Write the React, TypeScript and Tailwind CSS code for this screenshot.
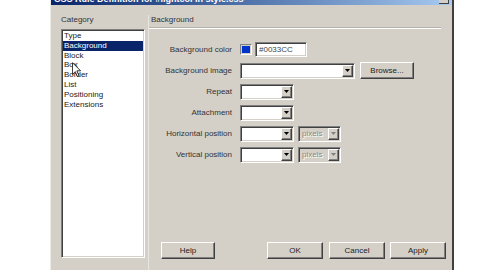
const sunken =
  "border border-t-[#808080] border-l-[#808080] border-r-white border-b-white shadow-[inset_1px_1px_0_#404040,inset_-1px_-1px_0_#d4d0c8]";
const raised =
  "border border-t-white border-l-white border-r-[#404040] border-b-[#404040] shadow-[inset_-1px_-1px_0_#808080] bg-[#d4d0c8]";

const CATEGORIES = ["Type", "Background", "Block", "Box", "Border", "List", "Positioning", "Extensions"];

function Arrow({ disabled }: { disabled?: boolean }) {
  return (
    <div className={`${raised} flex h-full w-[11px] shrink-0 items-center justify-center`}>
      <svg width="5" height="3" viewBox="0 0 5 3">
        <polygon points="0,0 5,0 2.5,3" fill={disabled ? "#808080" : "#000"} />
      </svg>
    </div>
  );
}

function Select({ w, disabled, value }: { w: string; disabled?: boolean; value?: string }) {
  return (
    <div
      className={`${sunken} ${w} flex h-[16px] items-stretch p-[1px] ${disabled ? "bg-[#d4d0c8]" : "bg-white"}`}
    >
      <div className="flex-1 truncate pl-[2px] leading-[12px] text-[#8a8780] [text-shadow:1px_1px_0_#fff]">
        {value}
      </div>
      <Arrow disabled={disabled} />
    </div>
  );
}

function Button({ label, w }: { label: string; w: string }) {
  return (
    <div className={`${raised} ${w} flex h-[17px] items-center justify-center text-[#222]`}>{label}</div>
  );
}

function Row({ label, children }: { label: string; children: React.ReactNode }) {
  return (
    <div className="flex h-[21px] items-center">
      <div className="w-[83px] shrink-0 text-right text-[#333]">{label}</div>
      <div className="ml-[8px] flex items-center">{children}</div>
    </div>
  );
}

export default function App() {
  return (
    <div className="relative flex h-[270px] w-[480px] overflow-hidden bg-white font-['Liberation_Sans',Arial,sans-serif] text-[8px] text-[#1c1c1c]">
      <div className="w-[50px] shrink-0" />
      <div className="flex w-[404px] shrink-0 flex-col border-l border-r-2 border-l-[#ecebe6] border-r-[#404040] bg-[#d4d0c8]">
        {/* title bar, mostly scrolled off the top */}
        <div className="flex h-[5px] items-start overflow-hidden bg-linear-to-r from-[#0a246a] to-[#a6caf0]">
          <div className="-mt-[6px] h-[11px] flex-1 pl-[3px] text-[9px] font-bold leading-[11px] text-white">
            CSS Rule Definition for #lightcol in style.css
          </div>
          <div className="mr-[3px] h-[4px] w-[10px] border-r border-b border-[#404040] bg-[#d4d0c8]" />
        </div>

        <div className="flex flex-1 pt-[10px]">
          {/* category column */}
          <div className="flex w-[96px] shrink-0 flex-col pl-[10px]">
            <div className="h-[10px] leading-[10px] text-[#333]">Category</div>
            <div className={`${sunken} mt-[4px] h-[229px] w-[84px] bg-white p-[1px]`}>
              {CATEGORIES.map((c) => (
                <div
                  key={c}
                  className={`h-[9.8px] pl-[1px] leading-[9.8px] ${
                    c === "Background" ? "bg-[#0a246a] text-white" : "text-[#222]"
                  }`}
                >
                  {c}
                </div>
              ))}
            </div>
          </div>

          {/* panel */}
          <div className="ml-[1px] flex flex-1 flex-col border-l border-l-[#e8e6e0]">
            <div className="h-[10px] pl-[2px] leading-[10px] text-[#333]">Background</div>
            <div className="mt-[2px] mr-[11px] border-t border-b border-t-[#b5b2aa] border-b-white" />

            <div className="mt-[10px] flex flex-col">
              <Row label="Background color">
                <div className="h-[11px] w-[12px] border border-[#808080] border-r-white border-b-white p-[1px]">
                  <div className="h-full w-full bg-[#0033cc]" />
                </div>
                <div className={`${sunken} ml-[3px] flex h-[15px] w-[52px] items-center bg-white pl-[3px] text-[#444]`}>
                  #0033CC
                </div>
              </Row>
              <Row label="Background image">
                <Select w="w-[115px]" />
                <div className="ml-[5px]">
                  <Button label="Browse..." w="w-[54px]" />
                </div>
              </Row>
              <Row label="Repeat">
                <Select w="w-[54px]" />
              </Row>
              <Row label="Attachment">
                <Select w="w-[54px]" />
              </Row>
              <Row label="Horizontal position">
                <Select w="w-[54px]" />
                <div className="ml-[4px]">
                  <Select w="w-[43px]" disabled value="pixels" />
                </div>
              </Row>
              <Row label="Vertical position">
                <Select w="w-[54px]" />
                <div className="ml-[4px]">
                  <Select w="w-[43px]" disabled value="pixels" />
                </div>
              </Row>
            </div>

            <div className="mt-auto mb-[11px] flex items-center pr-[6px] pl-[12px]">
              <Button label="Help" w="w-[54px]" />
              <div className="flex-1" />
              <Button label="OK" w="w-[56px]" />
              <div className="ml-[6px]">
                <Button label="Cancel" w="w-[56px]" />
              </div>
              <div className="ml-[5px]">
                <Button label="Apply" w="w-[56px]" />
              </div>
            </div>
          </div>
        </div>
      </div>

      {/* mouse pointer over the category list */}
      <svg className="absolute top-[62px] left-[72px]" width="9" height="16" viewBox="0 0 11 19">
        <path d="M0.5 0.5 L0.5 15 L4 11.5 L6.5 17.5 L8.5 16.5 L6 10.5 L10.5 10.5 Z" fill="#fff" stroke="#000" strokeWidth="1" />
      </svg>
    </div>
  );
}
